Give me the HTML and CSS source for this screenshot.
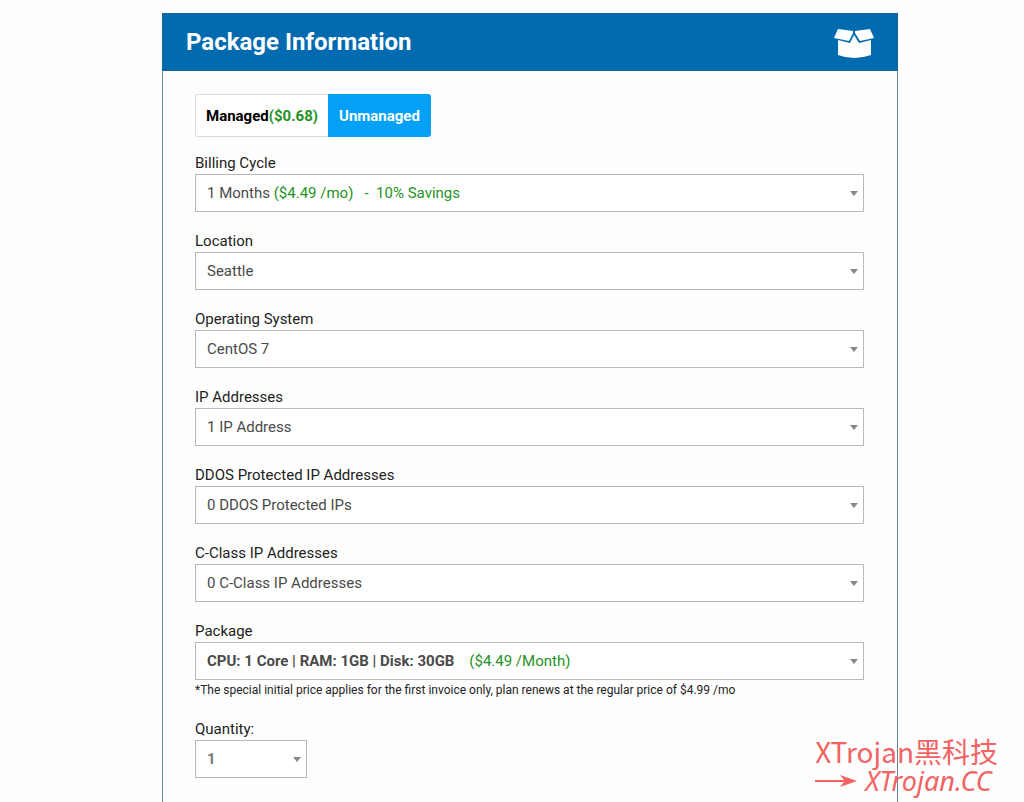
FILE: index.html
```html
<!DOCTYPE html>
<html lang="en">
<head>
  <meta charset="UTF-8">
  <meta name="viewport" content="width=device-width, initial-scale=1.0">
  <title>Package Information</title>
  <link rel="stylesheet" href="styles.css">
</head>
<body>
  <main class="package">
    <header class="package-header">
      <h1>Package Information</h1>
      <svg class="box-icon" viewBox="0 -4 40 34" aria-hidden="true">
        <path d="M4 0 L19 2 L19 4 L15 12 L0 9 Z"/>
        <path d="M36 0 L21 2 L21 4 L26 12 L40 9 Z"/>
        <path d="M4 11 L16 14 L20 6 L25 14 L37 11 V26 Q20 32 4 26 Z"/>
      </svg>
    </header>

    <form class="package-body">
      <div class="toggle">
        <button type="button">Managed<span class="price">($0.68)</span></button>
        <button type="button" class="active">Unmanaged</button>
      </div>

      <div class="field">
        <label for="cycle">Billing Cycle</label>
        <div class="select rich">
          <select id="cycle"><option>1 Months ($4.49 /mo) - 10% Savings</option></select>
          <span class="value" aria-hidden="true">1 Months <span class="price">($4.49 /mo) &nbsp; - &nbsp;10% Savings</span></span>
        </div>
      </div>

      <div class="field">
        <label for="location">Location</label>
        <div class="select">
          <select id="location"><option>Seattle</option></select>
        </div>
      </div>

      <div class="field">
        <label for="os">Operating System</label>
        <div class="select">
          <select id="os"><option>CentOS 7</option></select>
        </div>
      </div>

      <div class="field">
        <label for="ips">IP Addresses</label>
        <div class="select">
          <select id="ips"><option>1 IP Address</option></select>
        </div>
      </div>

      <div class="field">
        <label for="ddos">DDOS Protected IP Addresses</label>
        <div class="select">
          <select id="ddos"><option>0 DDOS Protected IPs</option></select>
        </div>
      </div>

      <div class="field">
        <label for="cclass">C-Class IP Addresses</label>
        <div class="select">
          <select id="cclass"><option>0 C-Class IP Addresses</option></select>
        </div>
      </div>

      <div class="field">
        <label for="plan">Package</label>
        <div class="select rich">
          <select id="plan"><option>CPU: 1 Core | RAM: 1GB | Disk: 30GB ($4.49 /Month)</option></select>
          <span class="value" aria-hidden="true"><b>CPU: 1 Core | RAM: 1GB | Disk: 30GB</b> &nbsp;&nbsp; <span class="price">($4.49 /Month)</span></span>
        </div>
        <p class="note">*The special initial price applies for the first invoice only, plan renews at the regular price of $4.99 /mo</p>
      </div>

      <div class="field quantity">
        <label for="quantity">Quantity:</label>
        <div class="select">
          <select id="quantity"><option>1</option></select>
        </div>
      </div>
    </form>
  </main>

  <div class="watermark">
    <div class="watermark-name">XTrojan黑科技</div>
    <div class="watermark-site">
      <svg class="arrow" viewBox="0 0 42 14" aria-hidden="true">
        <path d="M0 6 H29 L25 1 L42 7 L25 13 L29 8 H0 Z"/>
      </svg>
      <span>XTrojan.CC</span>
    </div>
  </div>
</body>
</html>
```

FILE: styles.css
```css
:root {
  --blue: #026bb0;
  --active: #03a0f8;
  --green: #259225;
  --line: #b9b9b9;
  --edge: #5f8b99;
}

* {
  box-sizing: border-box;
}

body {
  display: flex;
  flex-direction: column;
  min-height: 100vh;
  margin: 0;
  padding: 13px 126px 0 162px;
  font-family: Roboto, sans-serif;
  font-size: 15px;
  line-height: 22px;
  color: #222;
  background: #fefefe;
}

.package {
  flex: 1;
  border: 1px solid var(--edge);
  border-width: 0 1px;
}

.package-header {
  display: flex;
  align-items: center;
  justify-content: space-between;
  height: 58px;
  margin: 0 -1px;
  padding: 0 23px;
  color: #fff;
  background: var(--blue);
  border: 1px solid #1b6293;
}

.package-header h1 {
  margin: 0;
  font-size: 24px;
  font-weight: 700;
}

.box-icon {
  width: 40px;
  height: 34px;
  fill: #fff;
}

.package-body {
  padding: 23px 33px 0 32px;
}

.toggle {
  display: flex;
  margin-bottom: 15px;
}

.toggle button {
  height: 43px;
  padding: 0 10px;
  font: inherit;
  font-weight: 700;
  color: #000;
  background: #fff;
  border: 1px solid #ddd;
  border-right: 0;
  border-radius: 3px 0 0 3px;
  cursor: pointer;
}

.toggle .active {
  padding: 0 11px;
  color: #fff;
  background: var(--active);
  border: 0;
  border-radius: 0 3px 3px 0;
}

.price {
  color: var(--green);
}

.field {
  margin-bottom: 18px;
}

.field label {
  display: block;
}

.select {
  display: grid;
  align-items: center;
}

.select > * {
  grid-area: 1 / 1;
}

/* arrow */
.select::after {
  content: "";
  grid-area: 1 / 1;
  justify-self: end;
  margin-right: 6px;
  border: 4px solid transparent;
  border-top: 5px solid #888;
  border-bottom: 0;
  pointer-events: none;
}

select {
  width: 100%;
  height: 38px;
  padding: 0 24px 0 11px;
  font: inherit;
  color: #4a4a4a;
  background: #fff;
  border: 1px solid var(--line);
  border-radius: 0;
  appearance: none;
}

/* two-colour values sit over the select */
.rich select {
  color: transparent;
}

.rich option {
  color: #4a4a4a;
}

.value {
  padding-left: 12px;
  color: #4a4a4a;
  pointer-events: none;
}

.note {
  margin: 0;
  font-size: 12px;
  line-height: 20px;
}

.quantity {
  width: 112px;
  margin-bottom: 0;
}

.quantity select {
  font-weight: 700;
  color: #777;
}

.watermark {
  position: absolute;
  right: 26px;
  bottom: 6px;
  color: #f26363;
  font-family: "Noto Sans", "Noto Sans CJK SC", sans-serif;
  pointer-events: none;
}

.watermark-name {
  font-family: "Noto Sans CJK SC", sans-serif;
  font-size: 28px;
  line-height: 30px;
}

.watermark-site {
  display: flex;
  align-items: center;
  gap: 8px;
  font-size: 27px;
  font-style: italic;
  line-height: 30px;
}

.arrow {
  width: 42px;
  height: 14px;
  fill: #f26363;
}
```
